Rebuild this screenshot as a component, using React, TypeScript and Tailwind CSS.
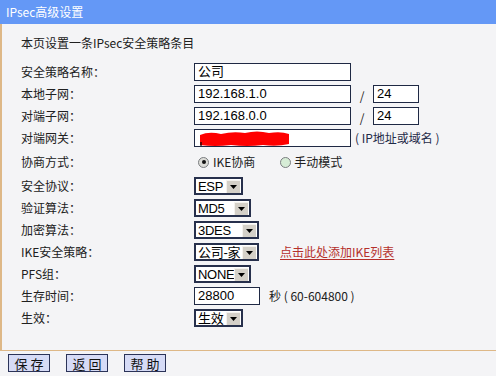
import React from "react"

const cjk = "font-['Noto_Sans_CJK_SC',sans-serif]"
const arial = "font-['Liberation_Sans','Noto_Sans_CJK_SC',sans-serif]"

function TextBox({ value, width, children }: { value: string; width: string; children?: React.ReactNode }) {
	return (
		<div className={`relative h-[18px] ${width} border border-[#1f2944] bg-white flex items-center px-[3px] text-[13px] text-black ${arial}`}>
			{value}
			{children}
		</div>
	)
}

function Select({ value, width }: { value: string; width: string }) {
	return (
		<div className={`h-[18px] ${width} border-2 border-[#27304c] bg-white flex items-center justify-between pl-[2px] pr-px text-[13px] text-black whitespace-nowrap overflow-hidden ${arial}`}>
			<span className="leading-none tracking-[-0.3px]">{value}</span>
			<span className="shrink-0 w-[14px] h-[13px] bg-[#d4d0c8] border-t border-l border-[#f4f2ee] flex items-center justify-center">
				<svg width="7" height="4" viewBox="0 0 7 4"><path d="M0 0h7L3.5 4z" fill="#000" /></svg>
			</span>
		</div>
	)
}

function Radio({ checked }: { checked?: boolean }) {
	return (
		<span className={`w-[11px] h-[11px] rounded-full border border-[#7a7d80] flex items-center justify-center ${checked ? "bg-[#dcdcd8]" : "bg-[#d6ecd6]"}`}>
			{checked && <span className="w-[4px] h-[4px] rounded-full bg-[#111]" />}
		</span>
	)
}

function Row({ label, h = "h-[22px]", children }: { label: string; h?: string; children: React.ReactNode }) {
	return (
		<div className={`flex items-center ${h}`}>
			<div className="w-[173px] text-[12px] text-[#202020]">{label}</div>
			<div className="flex items-center">{children}</div>
		</div>
	)
}

export default function App() {
	return (
		<div className={`w-[496px] h-[376px] bg-[#f4f4f6] flex flex-col ${cjk}`}>
			<div className="h-[24px] bg-[#6498f6] flex items-center pl-[6px] text-[12px] text-white">IPsec高级设置</div>
			<div className="h-[327px] border-l-2 border-b border-[#deb887] pl-[19px]">
				<div className="h-[37px] flex items-center text-[12px] text-[#202020]">本页设置一条IPsec安全策略条目</div>
				<Row label="安全策略名称：">
					<TextBox value="公司" width="w-[157px]" />
				</Row>
				<Row label="本地子网：">
					<TextBox value="192.168.1.0" width="w-[157px]" />
					<span className="w-[22px] text-center text-[12px] pt-[3px] text-[#202020]">/</span>
					<TextBox value="24" width="w-[46px]" />
				</Row>
				<Row label="对端子网：">
					<TextBox value="192.168.0.0" width="w-[157px]" />
					<span className="w-[22px] text-center text-[12px] pt-[3px] text-[#202020]">/</span>
					<TextBox value="24" width="w-[46px]" />
				</Row>
				<Row label="对端网关：">
					<TextBox value="" width="w-[157px]">
						<svg className="absolute left-0 top-0" width="100" height="17" viewBox="0 0 100 17">
							<path d="M5 5 Q14 1 26 4 Q38 1 50 3 Q62 0 74 3 Q86 1 94 4 L94 14 Q82 17 68 15 Q52 17 36 15 Q20 17 5 15 Z" fill="#ff0000" />
							<path d="M6 12v4" stroke="#000" strokeWidth="1.2" />
						</svg>
					</TextBox>
					<span className="ml-[4px] text-[12px] text-[#1f2a48]">( IP地址或域名 )</span>
				</Row>
				<Row label="协商方式：" h="h-[26px]">
					<span className="ml-[4px]"><Radio checked /></span>
					<span className="ml-[4px] text-[12px] text-[#202020]">IKE协商</span>
					<span className="ml-[25px]"><Radio /></span>
					<span className="ml-[3px] text-[12px] text-[#202020]">手动模式</span>
				</Row>
				<Row label="安全协议：">
					<Select value="ESP" width="w-[49px]" />
				</Row>
				<Row label="验证算法：">
					<Select value="MD5" width="w-[57px]" />
				</Row>
				<Row label="加密算法：">
					<Select value="3DES" width="w-[65px]" />
				</Row>
				<Row label="IKE安全策略：">
					<Select value="公司-家" width="w-[65px]" />
					<a className="ml-[21px] text-[12px] text-[#b5302c] underline underline-offset-2">点击此处添加IKE列表</a>
				</Row>
				<Row label="PFS组：">
					<Select value="NONE" width="w-[57px]" />
				</Row>
				<Row label="生存时间：">
					<TextBox value="28800" width="w-[66px]" />
					<span className="ml-[9px] text-[12px] text-[#202020]">秒 ( 60-604800 )</span>
				</Row>
				<Row label="生效：">
					<Select value="生效" width="w-[49px]" />
				</Row>
			</div>
			<div className="flex gap-[16px] pl-[8px] pt-[3px]">
				{["保 存", "返 回", "帮 助"].map((t) => (
					<button key={t} className="w-[42px] h-[18px] bg-[#d6dbf6] border border-[#2b3358] text-[13px] leading-none text-[#111] whitespace-pre">{t}</button>
				))}
			</div>
		</div>
	)
}
